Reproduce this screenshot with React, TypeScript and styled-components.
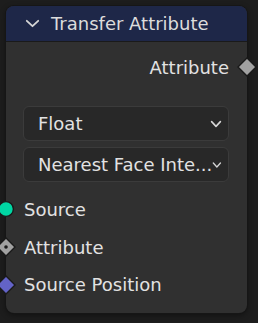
import React from "react";
import styled, { createGlobalStyle } from "styled-components";

const Global = createGlobalStyle`
  html, body { margin: 0; padding: 0; }
  body {
    width: 258px;
    height: 323px;
    overflow: hidden;
    background-color: #1d1d1d;
    background-image: radial-gradient(circle, #272727 1.2px, transparent 1.6px);
    background-size: 35px 35px;
    background-position: 0px 11px;
    font-family: "DejaVu Sans", sans-serif;
  }
`;

const Canvas = styled.div`
  padding: 6px 0 0 6px;
`;

const Node = styled.div`
  position: relative;
  width: 241px;
  height: 307px;
  background: #303030;
  border-radius: 8px;
  box-shadow: 0 0 0 1px #161616, 0 2px 6px rgba(0, 0, 0, 0.45);
  display: flex;
  flex-direction: column;
`;

const Header = styled.div`
  height: 35px;
  background: #1e2748;
  border-radius: 8px 8px 0 0;
  border-bottom: 1px solid #1a1a1a;
  display: flex;
  align-items: center;
  padding-left: 19px;
  gap: 11px;
  color: #dcdcdc;
  font-size: 18px;
`;

const Body = styled.div`
  display: flex;
  flex-direction: column;
  padding-top: 6px;
`;

const Row = styled.div<{ $align: "left" | "right"; $h: number }>`
  position: relative;
  height: ${(p) => p.$h}px;
  display: flex;
  align-items: center;
  justify-content: ${(p) => (p.$align === "right" ? "flex-end" : "flex-start")};
  padding: ${(p) => (p.$align === "right" ? "0 18px 0 0" : "0 0 0 18px")};
  color: #e2e2e2;
  font-size: 18px;
`;

const Spacer = styled.div<{ $h: number }>`
  height: ${(p) => p.$h}px;
`;

const Selects = styled.div`
  display: flex;
  flex-direction: column;
  gap: 6px;
  padding: 0 18px 0 17px;
  margin-bottom: 8px;
`;

const Select = styled.div`
  height: 33px;
  border: 1px solid #3b3b3b;
  background: #282828;
  border-radius: 6px;
  display: flex;
  align-items: center;
  padding: 0 6px 0 14px;
  color: #e2e2e2;
  font-size: 18px;
  white-space: nowrap;
`;

const SelectText = styled.span`
  flex: 1;
`;

const Socket = styled.div<{ $side: "left" | "right" }>`
  position: absolute;
  top: 50%;
  ${(p) => (p.$side === "left" ? "left: -10px;" : "right: -10px;")}
  transform: translateY(-50%);
  width: 20px;
  height: 20px;
  display: flex;
  align-items: center;
  justify-content: center;
`;

const Chevron = ({ w, h, sw }: { w: number; h: number; sw: number }) => (
  <svg width={w} height={h} viewBox={`0 0 ${w} ${h}`}>
    <polyline
      points={`${sw},${sw} ${w / 2},${h - sw} ${w - sw},${sw}`}
      fill="none"
      stroke="#d6d6d6"
      strokeWidth={sw}
      strokeLinecap="round"
      strokeLinejoin="round"
    />
  </svg>
);

const Diamond = ({ color, dot }: { color: string; dot?: boolean }) => (
  <svg width="20" height="20" viewBox="0 0 20 20">
    <polygon points="10,1 19,10 10,19 1,10" fill={color} stroke="#1a1a1a" strokeWidth="1.4" />
    {dot && <circle cx="10" cy="10" r="1.8" fill="#1a1a1a" />}
  </svg>
);

const Circle = ({ color }: { color: string }) => (
  <svg width="20" height="20" viewBox="0 0 20 20">
    <circle cx="10" cy="10" r="7.4" fill={color} stroke="#1a1a1a" strokeWidth="1.4" />
  </svg>
);

export default function App() {
  return (
    <>
      <Global />
      <Canvas>
        <Node>
          <Header>
            <Chevron w={15} h={9} sw={1.8} />
            <span>Transfer Attribute</span>
          </Header>
          <Body>
            <Row $align="right" $h={38}>
              Attribute
              <Socket $side="right">
                <Diamond color="#a1a1a1" />
              </Socket>
            </Row>
            <Spacer $h={20} />
            <Selects>
              <Select>
                <SelectText>Float</SelectText>
                <Chevron w={12} h={8} sw={1.6} />
              </Select>
              <Select>
                <SelectText>Nearest Face Inte...</SelectText>
                <Chevron w={12} h={8} sw={1.6} />
              </Select>
            </Selects>
            <Row $align="left" $h={38}>
              <Socket $side="left">
                <Circle color="#00d6a3" />
              </Socket>
              Source
            </Row>
            <Row $align="left" $h={38}>
              <Socket $side="left">
                <Diamond color="#a1a1a1" dot />
              </Socket>
              Attribute
            </Row>
            <Row $align="left" $h={37}>
              <Socket $side="left">
                <Diamond color="#6363c7" />
              </Socket>
              Source Position
            </Row>
          </Body>
        </Node>
      </Canvas>
    </>
  );
}
